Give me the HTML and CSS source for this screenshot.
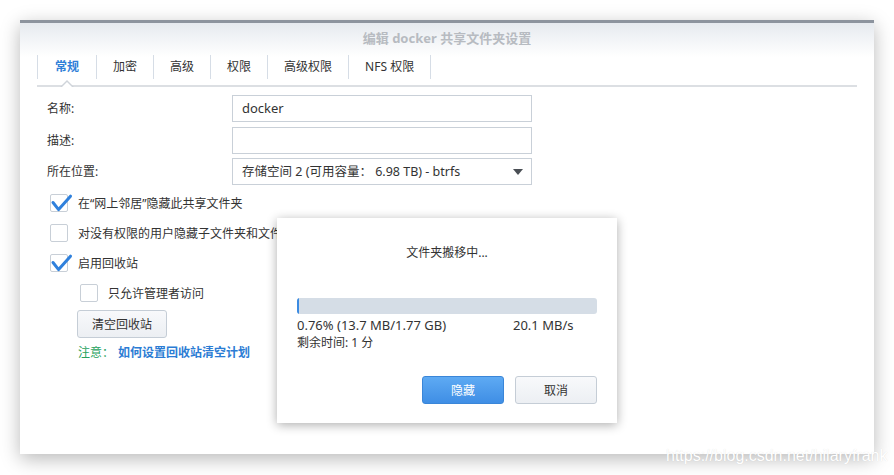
FILE: index.html
```html
<!DOCTYPE html>
<html lang="zh-CN">
<head>
<meta charset="utf-8">
<title>编辑 docker 共享文件夹设置</title>
<link rel="stylesheet" href="styles.css">
</head>
<body>
<div class="window">
  <div class="title">编辑 docker 共享文件夹设置</div>
  <div class="tabs">
    <div class="tab active">常规</div>
    <div class="tab">加密</div>
    <div class="tab">高级</div>
    <div class="tab">权限</div>
    <div class="tab">高级权限</div>
    <div class="tab">NFS 权限</div>
  </div>
  <div class="form">
    <div class="label">名称:</div>
    <div class="input"><span class="latin">docker</span></div>
    <div class="label">描述:</div>
    <div class="input"></div>
    <div class="label">所在位置:</div>
    <div class="input select"><span>存储空间 2 (可用容量： 6.98 TB) - btrfs</span><span class="arrow"></span></div>
  </div>
  <div class="checks">
    <div class="check-row"><span class="box checked"><svg viewBox="0 0 22 20" width="22" height="20"><path d="M3 8.5 L8.6 15.6 L20.5 2.2" fill="none" stroke="#2f80dc" stroke-width="3" stroke-linecap="round" stroke-linejoin="round"/></svg></span><span>在“网上邻居”隐藏此共享文件夹</span></div>
    <div class="check-row"><span class="box"></span><span>对没有权限的用户隐藏子文件夹和文件</span></div>
    <div class="check-row"><span class="box checked"><svg viewBox="0 0 22 20" width="22" height="20"><path d="M3 8.5 L8.6 15.6 L20.5 2.2" fill="none" stroke="#2f80dc" stroke-width="3" stroke-linecap="round" stroke-linejoin="round"/></svg></span><span>启用回收站</span></div>
    <div class="check-row sub"><span class="box"></span><span>只允许管理者访问</span></div>
    <button class="btn btn-plain btn-empty">清空回收站</button>
    <div class="note"><span class="note-label">注意：</span><span class="note-link">如何设置回收站清空计划</span></div>
  </div>

  <div class="dialog">
    <div class="dlg-title">文件夹搬移中...</div>
    <div class="progress"><div class="progress-fill" style="width:2px"></div></div>
    <div class="stats">
      <span class="latin">0.76% (13.7 MB/1.77 GB)</span>
      <span class="latin">20.1 MB/s</span>
    </div>
    <div class="remain">剩余时间: 1 分</div>
    <div class="dlg-buttons">
      <button class="btn btn-primary">隐藏</button>
      <button class="btn btn-plain">取消</button>
    </div>
  </div>
</div>
<div class="watermark">https://blog.csdn.net/hilaryfrank</div>
</body>
</html>
```

FILE: styles.css
```css
* { box-sizing: border-box; }
html, body { margin: 0; padding: 0; }
body {
  width: 894px;
  height: 475px;
  background: #ffffff;
  font-family: "Noto Sans", "Noto Sans CJK SC", sans-serif;
  font-size: 12px;
  color: #333;
  position: relative;
  overflow: hidden;
}
.window {
  position: relative;
  margin: 20px 0 0 20px;
  width: 854px;
  height: 434px;
  border-top: 3px solid #8d949e;
  background: linear-gradient(#e6eaef 0, #ffffff 34px, #ffffff 100%);
  box-shadow: 0 5px 18px rgba(0,0,0,0.28);
}
.title {
  height: 30px;
  line-height: 30px;
  text-align: center;
  font-size: 13px;
  font-weight: bold;
  color: #b7bbc1;
}
.tabs {
  display: flex;
  margin: 2px 17px 0;
  padding-bottom: 6px;
  border-bottom: 2px solid #dcdfe3;
}
.tab {
  position: relative;
  height: 24px;
  line-height: 24px;
  padding: 0 16px;
  border-right: 1px solid #d6dde6;
  color: #333;
  white-space: nowrap;
}
.tab:first-child { border-left: 1px solid #d6dde6; padding: 0 17px; }
.tab.active { color: #2f7fd8; font-weight: bold; }
.tab.active::before,
.tab.active::after {
  content: "";
  position: absolute;
  left: 50%;
  width: 0;
  height: 0;
  border-style: solid;
  border-color: transparent;
}
.tab.active::before {
  bottom: -8px;
  margin-left: -7px;
  border-width: 0 7px 7px 7px;
  border-bottom-color: #cfd4da;
}
.tab.active::after {
  bottom: -8px;
  margin-left: -5px;
  border-width: 0 5px 5px 5px;
  border-bottom-color: #ffffff;
}
.form {
  display: grid;
  grid-template-columns: 185px 300px;
  grid-auto-rows: 27px;
  row-gap: 4.5px;
  margin-top: 8px;
  padding-left: 27px;
}
.label {
  line-height: 27px;
  color: #333;
}
.input {
  height: 27px;
  border: 1px solid #c9d0d8;
  background: #fff;
  padding: 0 9px;
  line-height: 25px;
  color: #333;
  display: flex;
  align-items: center;
  justify-content: space-between;
}
.latin { font-size: 13px; }
.select span:first-child { font-size: 12.5px; }
.arrow {
  width: 0;
  height: 0;
  border-left: 5px solid transparent;
  border-right: 5px solid transparent;
  border-top: 6px solid #4a4f55;
  margin-right: -1px;
}
.checks {
  margin-top: 3px;
  padding-left: 30px;
  display: flex;
  flex-direction: column;
  align-items: flex-start;
}
.check-row {
  height: 30px;
  display: flex;
  align-items: center;
  gap: 10px;
  white-space: nowrap;
}
.check-row.sub { padding-left: 30px; }
.box {
  position: relative;
  width: 18px;
  height: 18px;
  border: 1px solid #c8cfd7;
  border-radius: 2px;
  background: #fff;
  flex: none;
}
.box svg {
  position: absolute;
  left: -1px;
  top: -1px;
  overflow: visible;
}
.btn {
  font-family: "Noto Sans", "Noto Sans CJK SC", sans-serif;
  font-size: 12px;
  height: 28px;
  border-radius: 3px;
  padding: 0;
  cursor: pointer;
}
.btn-plain {
  background: linear-gradient(#f8f9fb, #eceff3);
  border: 1px solid #c5cdd6;
  color: #333;
}
.btn-primary {
  background: linear-gradient(#5eaaf3, #3f8ee5);
  border: 1px solid #3a86d8;
  color: #fff;
}
.btn-empty {
  width: 90px;
  margin: 2px 0 0 27px;
}
.note {
  margin: 7px 0 0 28px;
  line-height: 16px;
  display: flex;
}
.note-label { color: #27a25e; width: 40px; }
.note-link { color: #2b7cd4; font-weight: bold; }

.dialog {
  position: absolute;
  left: 257px;
  top: 195px;
  width: 340px;
  height: 205px;
  background: #fff;
  box-shadow: 0 2px 10px rgba(0,0,0,0.32);
  padding: 25px 20px 19px;
  display: flex;
  flex-direction: column;
}
.dlg-title {
  text-align: center;
  line-height: 20px;
  color: #333;
}
.progress {
  margin-top: 35px;
  height: 16px;
  border-radius: 3px;
  background: #d5dde6;
  overflow: hidden;
}
.progress-fill {
  height: 100%;
  background: #3b8be2;
}
.stats {
  margin-top: 2px;
  display: grid;
  grid-template-columns: 216px 1fr;
  line-height: 18px;
}
.remain { line-height: 18px; }
.dlg-buttons {
  margin-top: 24px;
  display: flex;
  justify-content: flex-end;
  gap: 11px;
}
.dlg-buttons .btn { width: 82px; }

.watermark {
  position: absolute;
  left: 666px;
  top: 447px;
  font-family: "Liberation Sans", Arial, sans-serif;
  font-size: 16px;
  color: #ffffff;
  text-shadow: 0 0 1px rgba(0,0,0,0.12);
  white-space: nowrap;
}
```
